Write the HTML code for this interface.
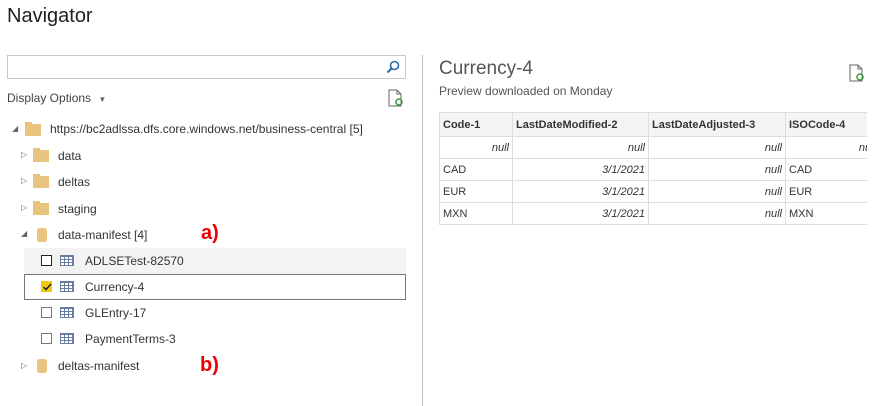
<!DOCTYPE html>
<html><head><style>
*{margin:0;padding:0;box-sizing:border-box}
body{width:889px;height:406px;background:#fff;font-family:"Liberation Sans",sans-serif;font-size:12px;color:#333;position:relative;overflow:hidden}
.a{position:absolute;white-space:nowrap}
.fold{position:absolute;width:16px;height:12px;background:#e8c47f}
.fold:before{content:"";position:absolute;left:0;top:-2px;width:7px;height:3px;background:#e8c47f}
.cyl{position:absolute;width:10px;height:14px;background:#e8c47f;border-radius:3px/2px}
.tri{position:absolute;font-size:8px;color:#666}
.cb{position:absolute;width:11px;height:11px;border:1.5px solid #777;background:#fff}
.tbl{position:absolute;width:14px;height:11px;border:1px solid #6a7fa0;background:repeating-linear-gradient(90deg,#fff 0 3px,#6a7fa0 3px 4px),#fff}
.tbl:after{content:"";position:absolute;left:0;right:0;top:0;bottom:0;background:repeating-linear-gradient(0deg,transparent 0 2px,#6a7fa0 2px 3px)}
table{position:absolute;border-collapse:collapse;font-size:11px;table-layout:fixed}
td,th{border:1px solid #ddd;height:22px;padding:0 3px;overflow:hidden;white-space:nowrap}
th{background:#f4f4f4;font-weight:bold;text-align:left;height:24px}
.r{text-align:right;font-style:italic}
</style></head><body>
<div class="a" style="left:7px;top:5px;font-size:20px;color:#222">Navigator</div>
<div class="a" style="left:7px;top:55px;width:399px;height:24px;border:1px solid #c8c8c8"></div>
<svg class="a" style="left:386px;top:60px" width="14" height="14"><circle cx="8.5" cy="5.5" r="4" fill="none" stroke="#2a6ab0" stroke-width="1.6"/><line x1="5.5" y1="8.5" x2="1.5" y2="12.5" stroke="#2a6ab0" stroke-width="2"/></svg>
<div class="a" style="left:7px;top:91px;font-size:12px;color:#444">Display Options <span style="font-size:8px;color:#666;margin-left:4px">▼</span></div>
<svg class="a" style="left:388px;top:89px" width="16" height="18"><path d="M1 1h8l4 4v12H1z" fill="#fff" stroke="#666"/><path d="M9 1v4h4" fill="none" stroke="#666"/><circle cx="11" cy="13" r="3" fill="none" stroke="#3a9a3a" stroke-width="1.5"/></svg>
<div class="a" style="left:422px;top:55px;width:1px;height:351px;background:#bbb"></div>

<div class="tri a" style="left:12px;top:124px">◢</div><div class="fold" style="left:25px;top:124px"></div><div class="a" style="left:50px;top:122px">https://bc2adlssa.dfs.core.windows.net/business-central [5]</div>
<div class="tri a" style="left:21px;top:150px">▷</div><div class="fold" style="left:33px;top:150px"></div><div class="a" style="left:58px;top:149px">data</div>
<div class="tri a" style="left:21px;top:176px">▷</div><div class="fold" style="left:33px;top:176px"></div><div class="a" style="left:58px;top:175px">deltas</div>
<div class="tri a" style="left:21px;top:203px">▷</div><div class="fold" style="left:33px;top:203px"></div><div class="a" style="left:58px;top:202px">staging</div>
<div class="tri a" style="left:21px;top:229px">◢</div><div class="cyl" style="left:37px;top:228px"></div><div class="a" style="left:58px;top:228px">data-manifest [4]</div>
<div class="a" style="left:201px;top:222px;font-size:20px;font-weight:bold;color:#e00">a)</div>
<div class="a" style="left:24px;top:248px;width:382px;height:26px;background:#f3f3f3"></div>
<div class="a" style="left:24px;top:274px;width:382px;height:26px;border:1px solid #777"></div>
<div class="cb" style="left:41px;top:255px;border-color:#222"></div><div class="tbl" style="left:60px;top:255px"></div><div class="a" style="left:85px;top:254px">ADLSETest-82570</div>
<div class="cb" style="left:41px;top:281px;background:#f2c811;border-color:#f2c811"></div><svg class="a" style="left:42px;top:282px" width="10" height="10"><path d="M1.5 5l2.5 2.5 5-5.5" fill="none" stroke="#222" stroke-width="1.5"/></svg><div class="tbl" style="left:60px;top:281px"></div><div class="a" style="left:85px;top:280px">Currency-4</div>
<div class="cb" style="left:41px;top:307px"></div><div class="tbl" style="left:60px;top:307px"></div><div class="a" style="left:85px;top:306px">GLEntry-17</div>
<div class="cb" style="left:41px;top:333px"></div><div class="tbl" style="left:60px;top:333px"></div><div class="a" style="left:85px;top:332px">PaymentTerms-3</div>
<div class="tri a" style="left:21px;top:361px">▷</div><div class="cyl" style="left:37px;top:359px"></div><div class="a" style="left:58px;top:359px">deltas-manifest</div>
<div class="a" style="left:200px;top:354px;font-size:20px;font-weight:bold;color:#e00">b)</div>

<div class="a" style="left:439px;top:58px;font-size:19px;color:#555">Currency-4</div>
<div class="a" style="left:439px;top:84px;font-size:12px;color:#555">Preview downloaded on Monday</div>
<svg class="a" style="left:849px;top:64px" width="16" height="18"><path d="M1 1h8l4 4v12H1z" fill="#fff" stroke="#666"/><path d="M9 1v4h4" fill="none" stroke="#666"/><circle cx="11" cy="13" r="3" fill="none" stroke="#3a9a3a" stroke-width="1.5"/></svg>
<div class="a" style="left:439px;top:112px;width:428px;height:114px;overflow:hidden">
<table style="left:0;top:0;width:440px"><colgroup><col style="width:73px"><col style="width:136px"><col style="width:137px"><col style="width:94px"></colgroup>
<tr><th>Code-1</th><th>LastDateModified-2</th><th>LastDateAdjusted-3</th><th>ISOCode-4</th></tr>
<tr><td class="r">null</td><td class="r">null</td><td class="r">null</td><td class="r">null</td></tr>
<tr><td>CAD</td><td class="r">3/1/2021</td><td class="r">null</td><td>CAD</td></tr>
<tr><td>EUR</td><td class="r">3/1/2021</td><td class="r">null</td><td>EUR</td></tr>
<tr><td>MXN</td><td class="r">3/1/2021</td><td class="r">null</td><td>MXN</td></tr>
</table></div>
</body></html>
